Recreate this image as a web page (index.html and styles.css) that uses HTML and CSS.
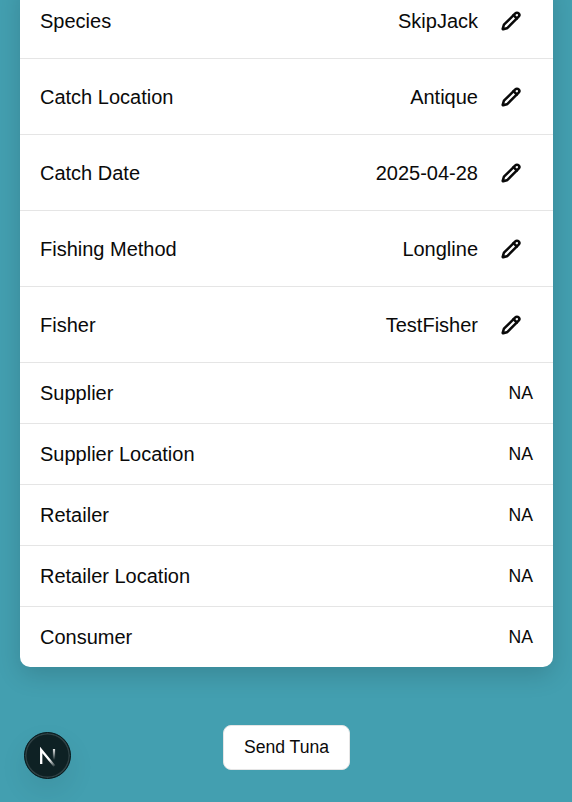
FILE: index.html
```html
<!DOCTYPE html>
<html lang="en">
<head>
<meta charset="utf-8">
<title>Tuna details</title>
<link rel="stylesheet" href="styles.css">
</head>
<body>
<svg class="defs" aria-hidden="true">
  <symbol id="pencil" viewBox="0 0 24 24"><path d="M21.174 6.812a1 1 0 0 0-3.986-3.987L3.842 16.174a2 2 0 0 0-.5.83l-1.321 4.352a.5.5 0 0 0 .623.622l4.353-1.32a2 2 0 0 0 .83-.497z"/><path d="m15 5 4 4"/></symbol>
</svg>
<main class="page">
  <section class="card">
    <div class="row editable"><span>Species</span><span class="value">SkipJack</span><svg class="icon"><use href="#pencil"/></svg></div>
    <div class="row editable"><span>Catch Location</span><span class="value">Antique</span><svg class="icon"><use href="#pencil"/></svg></div>
    <div class="row editable"><span>Catch Date</span><span class="value">2025-04-28</span><svg class="icon"><use href="#pencil"/></svg></div>
    <div class="row editable"><span>Fishing Method</span><span class="value">Longline</span><svg class="icon"><use href="#pencil"/></svg></div>
    <div class="row editable"><span>Fisher</span><span class="value">TestFisher</span><svg class="icon"><use href="#pencil"/></svg></div>
    <div class="row"><span>Supplier</span><span class="value small">NA</span></div>
    <div class="row"><span>Supplier Location</span><span class="value small">NA</span></div>
    <div class="row"><span>Retailer</span><span class="value small">NA</span></div>
    <div class="row"><span>Retailer Location</span><span class="value small">NA</span></div>
    <div class="row"><span>Consumer</span><span class="value small">NA</span></div>
  </section>
  <button class="send">Send Tuna</button>
</main>
<div class="badge">
  <svg viewBox="0 0 48 48" width="48" height="48" fill="none">
    <defs>
      <linearGradient id="diag" gradientUnits="userSpaceOnUse" x1="26" y1="27" x2="31" y2="33.5"><stop stop-color="#fff"/><stop offset="1" stop-color="#fff" stop-opacity="0.15"/></linearGradient>
      <linearGradient id="stem" gradientUnits="userSpaceOnUse" x1="30" y1="17" x2="30" y2="28"><stop stop-color="#fff" stop-opacity="0.9"/><stop offset="1" stop-color="#fff" stop-opacity="0"/></linearGradient>
    </defs>
    <path d="M17.2 32V18L30.4 34" stroke="url(#diag)" stroke-width="2.3"/>
    <path d="M30 17V28" stroke="url(#stem)" stroke-width="2.2"/>
  </svg>
</div>
</body>
</html>
```
FILE: styles.css
```css
* { box-sizing: border-box; }
body {
  margin: 0;
  height: 802px;
  overflow: hidden;
  background: #439fb0;
  color: #0a0a0a;
  font-family: "Liberation Sans", Arial, sans-serif;
}
.defs { display: none; }
.page {
  display: flex;
  flex-direction: column;
  align-items: center;
  padding: 0 19px 0 20px;
}
.card {
  width: 100%;
  margin-top: -17px;
  background: #fff;
  border-radius: 0 0 10px 10px;
  box-shadow: 0 8px 24px rgba(0, 0, 0, 0.15);
}
.row {
  display: flex;
  align-items: center;
  height: 61px;
  padding: 0 20px;
  border-bottom: 1px solid #e5e5e5;
  font-size: 20px;
  line-height: 30px;
}
.row:last-child { height: 60px; border-bottom: 0; }
.editable { height: 76px; }
.value { margin-left: auto; }
.small { font-size: 17.6px; }
.icon {
  width: 20px;
  height: 20px;
  margin: 0 12px 0 23px;
  overflow: visible;
  fill: none;
  stroke: #0a0a0a;
  stroke-width: 3;
  stroke-linecap: round;
  stroke-linejoin: round;
}
.send {
  width: 127px;
  height: 45px;
  margin-top: 58px;
  padding: 0;
  border: 1px solid #e5e5e5;
  border-radius: 8px;
  background: #fff;
  color: #0a0a0a;
  font: 17.6px "Liberation Sans", Arial, sans-serif;
}
.badge {
  position: fixed;
  left: 24px;
  bottom: 23px;
  width: 47px;
  height: 47px;
  border-radius: 50%;
  background: #0e2124;
  border: 1px solid #07171a;
  box-shadow: inset 0 0 0 1.5px #2f4144, 0 12px 28px rgba(0, 0, 0, 0.08);
}
.badge svg { display: block; margin: -1px; }
```
